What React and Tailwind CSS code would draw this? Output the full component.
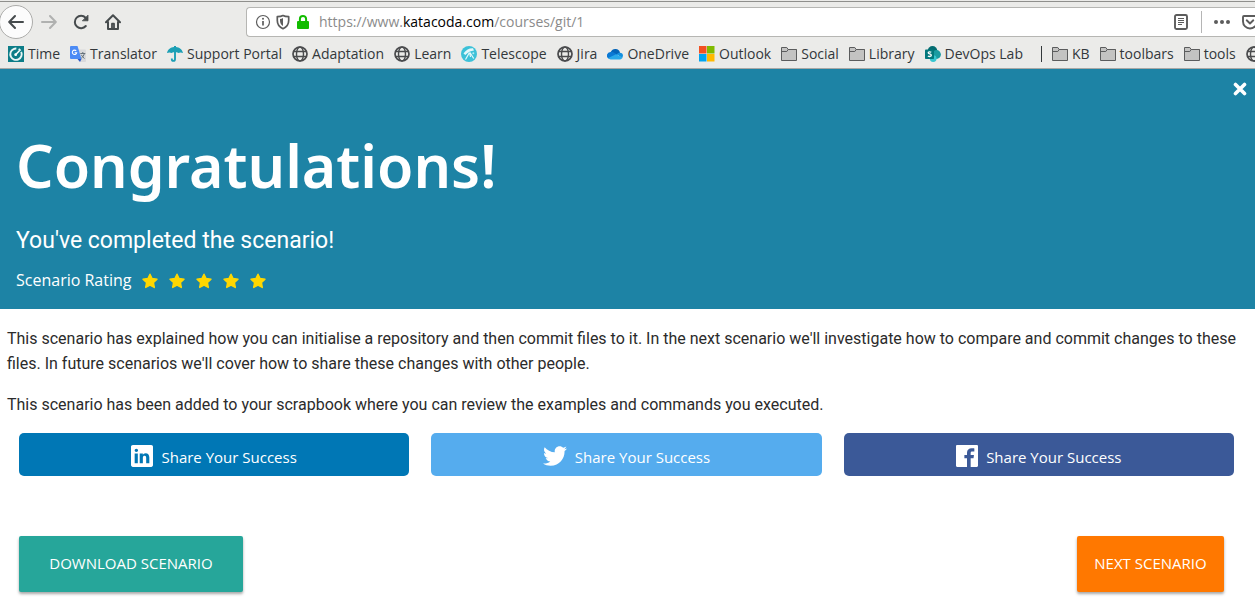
import React from 'react';

/* ---------- toolbar icons ---------- */
const BackIcon = () => (
  <svg className="size-4" viewBox="0 0 16 16" fill="none" stroke="currentColor" strokeWidth="2" strokeLinecap="round" strokeLinejoin="round">
    <path d="M15 8H1.500M7 2 1.200 8 7 14" />
  </svg>
);
const ForwardIcon = () => (
  <svg className="size-4" viewBox="0 0 16 16" fill="none" stroke="currentColor" strokeWidth="2" strokeLinecap="round" strokeLinejoin="round">
    <path d="M1 8h13.500M9 2l5.800 6L9 14" />
  </svg>
);
const ReloadIcon = () => (
  <svg className="size-4" viewBox="0 0 16 16" fill="none" stroke="currentColor" strokeWidth="2" strokeLinecap="round">
    <path d="M12.800 12A6.200 6.200 0 1 1 12.600 3.800" />
    <path d="M15 1.500v5.300H9.700z" fill="currentColor" strokeWidth=".8" strokeLinejoin="round" />
  </svg>
);
const HomeIcon = () => (
  <svg className="size-4" viewBox="0 0 16 16" fill="none" stroke="currentColor" strokeWidth="2" strokeLinecap="round" strokeLinejoin="round">
    <path d="M1 8.200 8 1.200l7 7" />
    <path d="M3 8v7h10V8" />
    <path d="M7 14.500v-4.800h2v4.800" strokeWidth="1.800" />
  </svg>
);
const InfoIcon = () => (
  <svg className="size-4 text-[#5c5c5c]" viewBox="0 0 16 16" fill="none" stroke="currentColor">
    <circle cx="8" cy="8" r="6.500" strokeWidth="1.200" />
    <path d="M8 7v4.500" strokeWidth="1.700" />
    <circle cx="8" cy="4.800" r="1" fill="currentColor" stroke="none" />
  </svg>
);
const ShieldIcon = () => (
  <svg className="size-4 text-[#5c5c5c]" viewBox="0 0 16 16" fill="none" stroke="currentColor" strokeWidth="1.700" strokeLinejoin="round">
    <path d="M8 1.500c1.700.9 3.500 1.100 5.700 1.200v3.800c0 3.800-2 6.600-5.700 8.200-3.700-1.600-5.700-4.400-5.700-8.200V2.700C4.500 2.600 6.300 2.400 8 1.500z" />
    <path d="M8 4v8C6 10.700 5 8.900 5 6.500V5c1.200-.1 2-.4 3-1z" fill="currentColor" stroke="none" />
  </svg>
);
const LockIcon = () => (
  <svg className="size-4 text-[#12bc00]" viewBox="0 0 16 16">
    <path d="M4.900 8V5a3.100 3.100 0 0 1 6.200 0v3" fill="none" stroke="currentColor" strokeWidth="2" />
    <rect x="2" y="7" width="12" height="8" rx="1" fill="currentColor" />
  </svg>
);
const ReaderIcon = () => (
  <svg className="size-4" viewBox="0 0 16 16" fill="none" stroke="currentColor">
    <rect x="2" y="1" width="12" height="14" rx="1.500" strokeWidth="1.900" />
    <path d="M5 4.500h6M5 6.500h6M5 8.500h6M5 10.500h4" />
  </svg>
);
const DotsIcon = () => (
  <svg className="size-4" viewBox="0 0 16 16" fill="currentColor">
    <circle cx="2" cy="8" r="2" /><circle cx="8" cy="8" r="2" /><circle cx="14" cy="8" r="2" />
  </svg>
);
const PocketIcon = () => (
  <svg className="size-4 shrink-0" viewBox="0 0 16 16" fill="none" stroke="currentColor" strokeWidth="1.900" strokeLinecap="round" strokeLinejoin="round">
    <path d="M2 2h12a1 1 0 0 1 1 1v4.500a7 7 0 0 1-14 0V3a1 1 0 0 1 1-1z" />
    <path d="m4.700 6.300 3.300 3.200 3.300-3.200" />
  </svg>
);

/* ---------- bookmark icons ---------- */
const GlobeIcon = () => (
  <svg className="size-4 shrink-0" viewBox="0 0 16 16" fill="none" stroke="#4a4b4d" strokeWidth="1.400">
    <circle cx="8" cy="8" r="7" strokeWidth="1.700" />
    <ellipse cx="8" cy="8" rx="3.500" ry="7" />
    <path d="M1.500 5.500h13M1.500 10.500h13" />
  </svg>
);
const FolderIcon = () => (
  <svg className="size-4 shrink-0" viewBox="0 0 16 16" fill="#c3c3c2" stroke="#5b5c5d" strokeLinejoin="round">
    <path d="M.5 14.500v-13h5.300l1.400 2h8.300v11z" />
    <path d="M.5 5.500h5.300l1.400-2h8.300" fill="none" />
  </svg>
);
const TimeIcon = () => (
  <svg className="size-4 shrink-0" viewBox="0 0 16 16">
    <path d="M0 0h16v16H0z" fill="#0d7d88" />
    <circle cx="8" cy="8.200" r="5.700" fill="none" stroke="#e9f5f5" strokeWidth="1.900" strokeDasharray="29 2.200 2.400 2.200" transform="rotate(-25 8 8.200)" />
    <path d="m7.500 8.800 3.700-3.800" stroke="#fff" strokeWidth="1.500" strokeLinecap="round" />
    <circle cx="7.700" cy="8.700" r="1.400" fill="#fff" />
  </svg>
);
const TranslatorIcon = () => (
  <svg className="size-4 shrink-0" viewBox="0 0 16 16">
    <path d="M6 3.500h9a1 1 0 0 1 1 1V15a1 1 0 0 1-1 1h-4.500z" fill="#d9dadc" />
    <path d="M1 0h6.500l4 13H1a1 1 0 0 1-1-1V1a1 1 0 0 1 1-1z" fill="#4c8bf5" />
    <path d="M7.500 13h4L10 16z" fill="#2a56c6" />
    <path d="M6.200 4.900a2.200 2.200 0 1 0 .5 1.800H4.600" fill="none" stroke="#fff" strokeWidth="1.100" />
    <path d="M10.300 7.500h5M12.800 6v1.500M14.300 7.500c-.4 2-1.500 3.600-3 4.700M11.400 8.800c.6 1.500 1.700 2.700 3.100 3.700" fill="none" stroke="#65727b" strokeWidth="1" />
  </svg>
);
const UmbrellaIcon = () => (
  <svg className="size-4 shrink-0" viewBox="0 0 16 16">
    <path d="M0 7C.8 3.500 3.800 1.200 7 1V0h2v1c3.200.2 6.200 2.500 7 6-1.600-.8-3.300-.8-4.700.1C9.900 6.300 9.500 6.300 8 6.300s-1.900 0-3.300.8C3.300 6.200 1.600 6.200 0 7z" fill="#1c9fb5" />
    <path d="M8 5v8.300a1.600 1.600 0 0 1-3.200 0v-.8" fill="none" stroke="#1c9fb5" strokeWidth="1.900" />
  </svg>
);
const TelescopeIcon = () => (
  <svg className="size-4 shrink-0" viewBox="0 0 16 16">
    <circle cx="8" cy="8" r="8" fill="#3cc1d8" />
    <path d="M2.500 7.500C5 3.800 8.500 2 12 2.200l1 2.300C9.800 4.800 7 6.300 4.300 9z" fill="#e4f8fb" />
    <path d="m8.500 6.500-4 7M8.700 6.800l.8 4.200M9 6.500l3.700 6" stroke="#e4f8fb" strokeWidth="1.200" />
    <circle cx="12.300" cy="7.300" r="1" fill="#b5ebf4" />
  </svg>
);
const OneDriveIcon = () => (
  <svg className="size-4 shrink-0" viewBox="0 0 16 16">
    <path d="M3.800 6A4.900 4.900 0 0 1 13 6.700L8 10z" fill="#0364b8" />
    <path d="M3.600 5.900c1.400-.2 2.400.2 3.600.9L11 9l-9.500 3.500A3.600 3.600 0 0 1 3.600 5.900z" fill="#0a78d4" />
    <path d="M9.800 8.200c1-1 2-1.500 3-1.400A3.200 3.200 0 0 1 16 10l-1 2z" fill="#1490df" />
    <path d="M1.300 12 9 8.200l6.600 3.300c-.4 1.100-1.400 1.900-2.700 1.900H3.600c-.9 0-1.700-.4-2.300-1.400z" fill="#28a8ea" />
  </svg>
);
const OutlookIcon = () => (
  <svg className="size-4 shrink-0" viewBox="0 0 16 16">
    <path d="M0 0h7.500v7.500H0z" fill="#f25022" /><path d="M8 0h7.500v7.500H8z" fill="#7fba00" />
    <path d="M0 8h7.500v7.500H0z" fill="#00a4ef" /><path d="M8 8h7.500v7.500H8z" fill="#ffb900" />
  </svg>
);
const SharePointIcon = () => (
  <svg className="size-4 shrink-0" viewBox="0 0 16 16">
    <circle cx="7.500" cy="4.800" r="4.800" fill="#036c70" />
    <circle cx="11.500" cy="8.500" r="4.400" fill="#1a9ba1" />
    <circle cx="8.200" cy="12.600" r="3.400" fill="#37c6d0" />
    <rect x="0" y="3.500" width="9" height="9.500" rx=".8" fill="#03787c" />
    <path d="M6.300 6.300c-1-.7-3.100-.8-3.100.5 0 1.400 3.100.9 3.100 2.500 0 1.500-2.300 1.400-3.400.7" fill="none" stroke="#fff" strokeWidth="1.300" />
  </svg>
);

/* ---------- page icons ---------- */
const LinkedInIcon = () => (
  <svg className="size-[22px]" viewBox="64 64 384 384" fill="currentColor">
    <path d="M417.200 64H96.800C79.300 64 64 76.600 64 93.900V415c0 17.400 15.300 32.900 32.800 32.900h320.300c17.600 0 30.800-15.600 30.800-32.900V93.900C448 76.600 434.700 64 417.200 64zM183 384h-55V213h55v171zm-25.600-197h-.4c-17.600 0-29-13.100-29-29.500 0-16.700 11.700-29.500 29.700-29.500s29 12.700 29.400 29.500c0 16.400-11.400 29.500-29.700 29.500zM384 384h-55v-93.500c0-22.400-8-37.700-27.900-37.700-15.200 0-24.200 10.300-28.200 20.300-1.500 3.600-1.900 8.500-1.900 13.500V384h-55V213h55v23.800c8-11.400 20.500-27.800 49.600-27.800 36.100 0 63.400 23.800 63.400 75.100V384z" />
  </svg>
);
const TwitterIcon = () => (
  <svg className="h-5 w-6" viewBox="20 64 472 384" fill="currentColor">
    <path d="M492 109.500c-17.400 7.700-36 12.900-55.600 15.300 20-12 35.400-31 42.600-53.600-18.700 11.100-39.400 19.200-61.500 23.500C399.800 75.800 374.600 64 346.800 64c-53.500 0-96.800 43.400-96.800 96.900 0 7.600.8 15 2.500 22.100-80.500-4-151.900-42.600-199.600-101.300-8.300 14.300-13.100 31-13.100 48.700 0 33.600 17.200 63.300 43.200 80.700-16-.4-31-4.800-44-12.100v1.200c0 47 33.400 86.100 77.700 95-8.100 2.200-16.700 3.400-25.500 3.400-6.200 0-12.300-.6-18.200-1.800 12.300 38.500 48.100 66.500 90.500 67.300-33.100 26-74.900 41.500-120.300 41.500-7.800 0-15.500-.5-23.100-1.400C62.800 432 113.700 448 168.300 448 346.600 448 444 300.300 444 172.200c0-4.200-.1-8.400-.3-12.500C462.600 146 479 129 492 109.500z" />
  </svg>
);
const FacebookIcon = () => (
  <svg className="size-[22px]" viewBox="64 64 384 384" fill="currentColor">
    <path d="M426.800 64H85.200C73.500 64 64 73.500 64 85.200v341.600c0 11.700 9.500 21.200 21.200 21.200H256V296h-45.900v-56H256v-41.400c0-49.600 34.400-76.600 78.700-76.600 21.200 0 44 1.600 49.300 2.300v51.800h-35.300c-24.100 0-28.700 11.400-28.700 28.200V240h57.400l-7.500 56H320v152h106.800c11.700 0 21.200-9.500 21.200-21.200V85.200c0-11.700-9.500-21.200-21.200-21.200z" />
  </svg>
);
const StarIcon = () => (
  <svg className="size-4 text-[#ffd700]" viewBox="0 0 16 16" fill="currentColor" stroke="currentColor" strokeWidth="1.400" strokeLinejoin="round">
    <path d="m8 1.200 2.100 4.300 4.900.7-3.500 3.400.8 4.900L8 12.200l-4.300 2.300.8-4.900L1 6.200l4.900-.7z" />
  </svg>
);
const CloseIcon = () => (
  <svg className="size-[14px]" viewBox="0 0 14 14" fill="none" stroke="currentColor" strokeWidth="3.600" strokeLinecap="round">
    <path d="m2.500 2.500 9 9M11.500 2.500l-9 9" />
  </svg>
);

const leftBookmarks = [
  ['Time', TimeIcon],
  ['Translator', TranslatorIcon],
  ['Support Portal', UmbrellaIcon],
  ['Adaptation', GlobeIcon],
  ['Learn', GlobeIcon],
  ['Telescope', TelescopeIcon],
  ['Jira', GlobeIcon],
  ['OneDrive', OneDriveIcon],
  ['Outlook', OutlookIcon],
  ['Social', FolderIcon],
  ['Library', FolderIcon],
  ['DevOps Lab', SharePointIcon],
];
const rightBookmarks = [
  ['KB', FolderIcon],
  ['toolbars', FolderIcon],
  ['tools', FolderIcon],
  ['', GlobeIcon],
];

const Bookmark = ({ label, Icon }) => (
  <a href="#" aria-label={label || 'Bookmark'} className="flex shrink-0 items-center gap-1 whitespace-nowrap">
    <Icon />
    {label && <span>{label}</span>}
  </a>
);

function BrowserChrome() {
  return (
    <header className="overflow-hidden border-b border-[#a9a9a6] bg-[#ebebe9] pt-px text-sm text-[#33383b] font-['Open_Sans','Noto_Sans',sans-serif]">
      <div className="flex h-[41px] items-center border-t border-[#8f8f8c] text-[#464b4d]">
        <button aria-label="Back" className="-ml-px flex size-[34px] shrink-0 items-center justify-center rounded-full border border-[#acacaa] bg-[#fcfcfc]">
          <BackIcon />
        </button>
        <div className="ml-2 flex items-center gap-4">
          <button aria-label="Forward" className="text-[#b0b1b0]"><ForwardIcon /></button>
          <button aria-label="Reload"><ReloadIcon /></button>
          <button aria-label="Home"><HomeIcon /></button>
        </div>
        <div className="ml-[125px] flex h-[30px] min-w-0 flex-1 items-center rounded-l border border-r-0 border-[#b6b6b3] bg-white pl-2">
          <div className="flex items-center gap-1">
            <InfoIcon />
            <ShieldIcon />
            <LockIcon />
          </div>
          <div className="ml-2 min-w-0 flex-1 truncate text-[#8b8b8b]">
            https://www.<span className="text-black">katacoda.com</span>/courses/git/1
          </div>
          <div className="-mr-[3px] flex items-center text-[#5c5c5c]">
            <button aria-label="Reader view"><ReaderIcon /></button>
            <span className="mx-3 h-[22px] w-px bg-[#b5b5b5]" />
            <button aria-label="Page actions"><DotsIcon /></button>
            <button aria-label="Save to Pocket" className="ml-3"><PocketIcon /></button>
          </div>
        </div>
      </div>
      <nav className="flex h-[26px] items-center gap-2.5 pb-0.5 pl-2">
        {leftBookmarks.map(([label, Icon]) => <Bookmark key={label} label={label} Icon={Icon} />)}
        <span className="ml-2 h-4 w-px shrink-0 bg-[#33383b]" />
        {rightBookmarks.map(([label, Icon]) => <Bookmark key={label} label={label} Icon={Icon} />)}
      </nav>
    </header>
  );
}

function Hero() {
  return (
    <section className="bg-[#1d83a5] px-4 pb-3.5 text-white">
      <div className="-mr-2 flex h-10 items-center justify-end">
        <button aria-label="Close"><CloseIcon /></button>
      </div>
      <h1 className="mt-[18px] text-[59px] leading-[76px] font-semibold font-['Noto_Sans','Open_Sans',sans-serif]">Congratulations!</h1>
      <p className="mt-[22px] text-[23px] leading-8 font-['Roboto','Liberation_Sans',sans-serif]">You&apos;ve completed the scenario!</p>
      <div className="mt-2.5 flex items-center gap-2.5 leading-[30px] font-['Open_Sans','Noto_Sans',sans-serif]">
        <span className="-mt-0.5">Scenario Rating</span>
        <span className="flex gap-[11px]" role="img" aria-label="Five stars">
          {[1, 2, 3, 4, 5].map((n) => <StarIcon key={n} />)}
        </span>
      </div>
    </section>
  );
}

const ShareLink = ({ color, Icon, network }) => (
  <a href="#" aria-label={`Share Your Success on ${network}`} className={`flex h-[43px] flex-1 items-center justify-center gap-2 rounded-[5px] pt-0.5 text-[15px] text-white font-['Open_Sans','Noto_Sans',sans-serif] ${color}`}>
    <Icon />
    <span className="pt-1">Share Your Success</span>
  </a>
);

const actionClass = "h-14 rounded-xs pb-0.5 text-[15px] text-white shadow-[0_2px_3px_rgba(0,0,0,0.35)] font-['Open_Sans','Noto_Sans',sans-serif]";

export default function App() {
  return (
    <div className="min-h-screen bg-white">
      <BrowserChrome />
      <main>
        <Hero />
        <div className="space-y-4 px-[7px] pt-[17px] text-base leading-[25px] text-[#2b2b2b] font-['Roboto','Liberation_Sans',sans-serif]">
          <p>This scenario has explained how you can initialise a repository and then commit files to it. In the next scenario we&apos;ll investigate how to compare and commit changes to these files. In future scenarios we&apos;ll cover how to share these changes with other people.</p>
          <p>This scenario has been added to your scrapbook where you can review the examples and commands you executed.</p>
        </div>
        <div className="mt-4 flex gap-[22px] pr-[21px] pl-[19px]">
          <ShareLink color="bg-[#0077b5]" Icon={LinkedInIcon} network="LinkedIn" />
          <ShareLink color="bg-[#55acee]" Icon={TwitterIcon} network="Twitter" />
          <ShareLink color="bg-[#3b5998]" Icon={FacebookIcon} network="Facebook" />
        </div>
        <div className="mt-[60px] flex justify-between pr-[31px] pb-5 pl-[19px]">
          <button className={`w-56 bg-[#26a69a] ${actionClass}`}>DOWNLOAD SCENARIO</button>
          <button className={`w-[147px] bg-[#ff7800] ${actionClass}`}>NEXT SCENARIO</button>
        </div>
      </main>
    </div>
  );
}
